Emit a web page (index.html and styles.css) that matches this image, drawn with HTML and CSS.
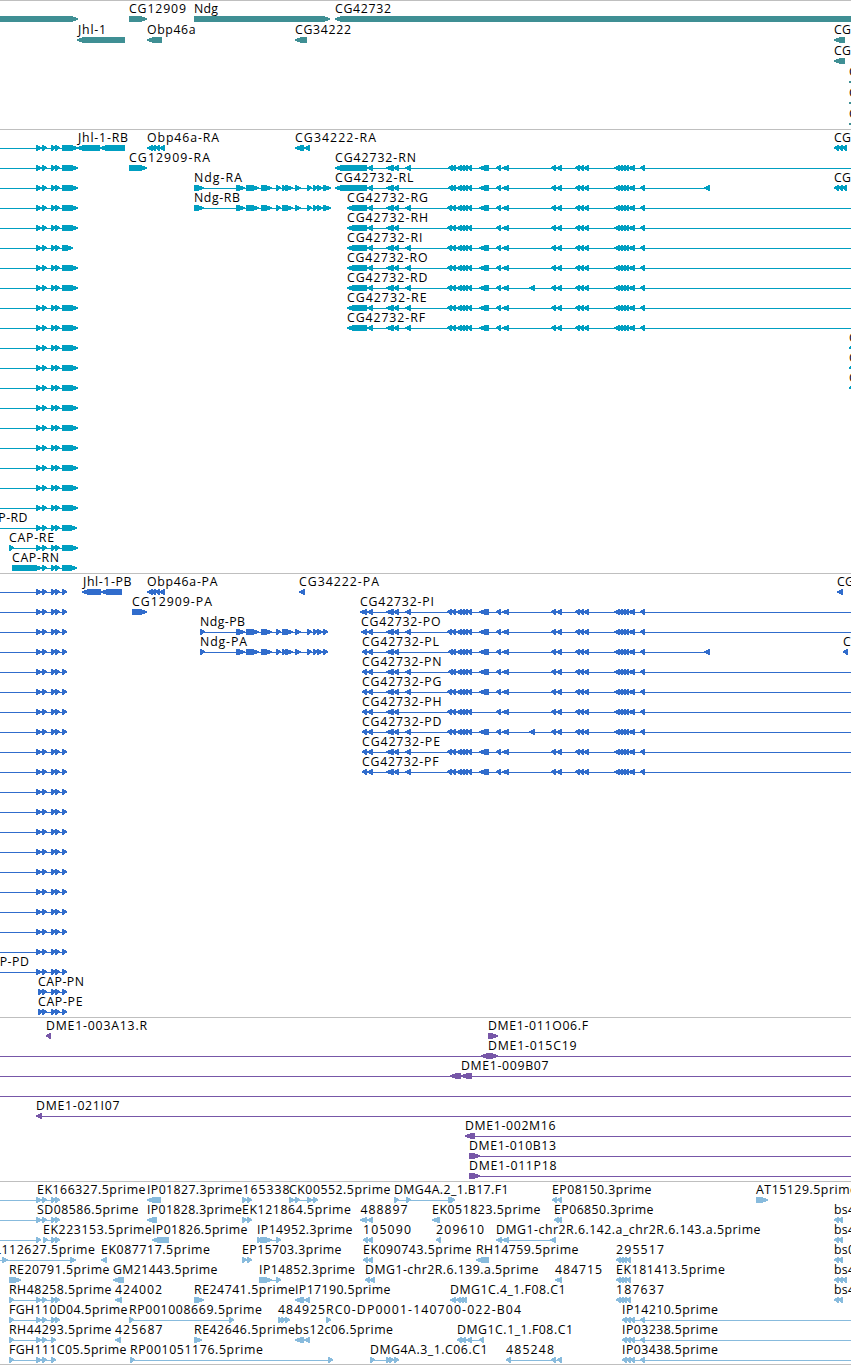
FILE: index.html
```html
<!DOCTYPE html>
<html lang="en">
<head>
    <meta charset="UTF-8">
    <meta name="viewport" content="width=device-width, initial-scale=1.0">
    <title>Genome Browser</title>
    <link rel="stylesheet" href="styles.css">
</head>
<body>

<div class="browser">
    <div class="track genes" id="genes"></div>
    <div class="track transcripts" id="transcripts"></div>
    <div class="track proteins" id="proteins"></div>
    <div class="track clones" id="clones"></div>
    <div class="track ests" id="ests"></div>
</div>

<script src="script.js"></script>
</body>
</html>
```
FILE: styles.css
```css
body {
    margin: 0;
    padding: 0;
    background-color: #fff;
    font-family: "Open Sans", "DejaVu Sans", sans-serif;
}
.browser {
    display: flex;
    flex-direction: column;
    overflow: hidden;
    height: 1365px;
}
.track {
    border-top: 1px solid #bfbfbf;
    box-sizing: border-box;
    overflow: hidden;
}
.track svg {
    display: block;
    width: 100%;
    height: 100%;
}
.track text {
    font-size: 12.3px;
    fill: #000;
}
.genes {
    height: 129px;
    color: #3f8f94;
}
.transcripts {
    height: 444px;
    color: #009fc1;
}
.proteins {
    height: 444px;
    color: #306ccc;
}
.clones {
    height: 164px;
    color: #7757a8;
}
.ests {
    height: 184px;
    color: #88bbdd;
    border-bottom: 1px solid #bfbfbf;
}
.glyph {
    fill: currentColor;
    shape-rendering: crispEdges;
}
```
FILE: script.js
```javascript
var NS = 'http://www.w3.org/2000/svg';
var END = 851;

// feature: [row, strand, label, label start, label end, exons, line start, line end]
var genes = [
    [0, '>', '', 0, 0, '-20-78'],
    [0, '>', 'CG12909', 129, 186, '129-147'],
    [0, '>', 'Ndg', 194, 218, '194-330'],
    [0, '<', 'CG42732', 335, 391, '335-870'],
    [1, '<', 'Jhl-1', 78, 106, '77-125'],
    [1, '<', 'Obp46a', 147, 195.5, '147-162'],
    [1, '<', 'CG34222', 295, 351, '295-307'],
    [1, '<', 'CG', 834, 851, '834-845'],
    [2, '<', 'CG', 834, 851, '834-845'],
    [3, '<', 'CG', 849, 866, '849-860'],
    [4, '<', 'CG', 849, 866, '849-860'],
    [5, '<', 'CG', 849, 866, '849-860']
];

var ndg = '236-245 246-259 261-272 276-281 ';
var ndgSplit = '282-287 285-293 295-301 307-312 313-318 317-323 ';
var ndgWhole = '282-293 295-301 307-312 313-318 317-323 ';
var left = ' 386-394 393-399';
var mid = ' 451-456 456-462 460-465 463-468 467-472';
var right = ' 496-501 502-509 551-556 556-562 575-580 579-584 583-589 614-620 618-623 621-626 624-629 628-635 640-645';

function cg42732(first, opts) {
    opts = opts || {};
    var s = first + left;
    if (!opts.short) s += ' 405-411';
    s += (opts.late ? ' 448-453' : ' 447-452') + mid;
    if (!opts.skip) s += ' 479-489';
    s += right;
    if (opts.extra) s += ' ' + opts.extra;
    return s;
}

var transcripts = [
    [0, '<', 'Jhl-1-RB', 78, 128, '77-100 100-125'],
    [0, '<', 'Obp46a-RA', 147, 219, '147-153 151-156 155-160 159-165'],
    [0, '<', 'CG34222-RA', 295, 376, '295-304 304-310'],
    [0, '<', 'CG', 834, 851, '834-839 838-843 842-847'],
    [1, '>', 'CG12909-RA', 129, 210, '129-147'],
    [1, '<', 'CG42732-RN', 335, 416, cg42732('335-367 367-373', {late: true}), 335, END],
    [2, '>', 'Ndg-RA', 194, 242, '194-204 ' + ndg + ndgSplit + '323-331'],
    [2, '<', 'CG42732-RL', 335, 413.5, cg42732('335-367 367-373', {late: true, short: true, extra: '704-710'})],
    [2, '<', 'CG', 834, 851, '834-839 838-843 842-847'],
    [3, '>', 'Ndg-RB', 194, 240, '194-204 ' + ndg + ndgWhole + '323-331'],
    [3, '<', 'CG42732-RG', 347, 428, cg42732('347-367 367-373'), 347, END],
    [4, '<', 'CG42732-RH', 347, 428, cg42732('347-367 367-373', {short: true, skip: true}), 347, END],
    [5, '<', 'CG42732-RI', 347, 422.5, cg42732('347-367 367-373'), 347, END],
    [6, '<', 'CG42732-RO', 347, 427.5, cg42732('347-367 367-373'), 347, END],
    [7, '<', 'CG42732-RD', 347, 427.5, cg42732('347-367 367-373', {extra: '529-535'}), 347, END],
    [8, '<', 'CG42732-RE', 347, 426.5, cg42732('347-367 367-373'), 347, END],
    [9, '<', 'CG42732-RF', 347, 425, cg42732('347-367 367-373'), 347, END],
    [10, '<', 'CG', 849, 866, '849-854'],
    [11, '<', 'CG', 849, 866, '849-854'],
    [12, '<', 'CG', 849, 866, '849-854'],
    [19, '>', 'CAP-RD', -18, 27.5, '36-42 42-47 51-56 55-60 62-77', 0, 77],
    [20, '>', 'CAP-RE', 9, 54, '9-14 36-42 42-47 51-56 55-60 62-78'],
    [21, '>', 'CAP-RN', 12, 59, '12-42 42-47 51-56 55-60 62-77']
];

var proteins = [
    [0, '<', 'Jhl-1-PB', 83, 131.5, '82-101 101-122'],
    [0, '<', 'Obp46a-PA', 147, 217.5, '147-153 151-156 155-160 159-165'],
    [0, '<', 'CG34222-PA', 299, 379, '299-305'],
    [0, '<', 'CG', 837, 854, '837-843'],
    [1, '>', 'CG12909-PA', 132, 212, '132-147'],
    [1, '<', 'CG42732-PI', 360, 434, cg42732('360-367 367-373'), 361, END],
    [2, '>', 'Ndg-PB', 200, 245, '200-205 ' + ndg + ndgWhole + '323-328'],
    [2, '<', 'CG42732-PO', 361, 440.5, cg42732('361-367 367-373'), 361, END],
    [3, '>', 'Ndg-PA', 200, 247, '200-205 ' + ndg + ndgSplit + '323-328'],
    [3, '<', 'CG42732-PL', 362, 439, cg42732('362-367 367-373', {late: true, short: true, extra: '704-710'})],
    [3, '<', 'CG', 843, 860, '843-848'],
    [4, '<', 'CG42732-PN', 362, 441.5, cg42732('362-367 367-373', {late: true}), 362, END],
    [5, '<', 'CG42732-PG', 362, 441.5, cg42732('362-367 367-373'), 362, END],
    [6, '<', 'CG42732-PH', 362, 441.5, cg42732('362-367 367-373', {short: true, skip: true}), 362, END],
    [7, '<', 'CG42732-PD', 362, 441.5, cg42732('362-367 367-373', {extra: '529-535'}), 362, END],
    [8, '<', 'CG42732-PE', 362, 440, cg42732('362-367 367-373'), 362, END],
    [9, '<', 'CG42732-PF', 362, 438.5, cg42732('362-367 367-373'), 362, END],
    [19, '>', 'CAP-PD', -17, 29, '36-42 42-47 51-56 55-60 62-67', 0, 67],
    [20, '>', 'CAP-PN', 38, 84, '38-43 42-47 51-56 55-60 62-67'],
    [21, '>', 'CAP-PE', 38, 82.5, '38-43 42-47 51-56 55-60 62-67']
];

// the CAP gene has one isoform on every row above its labelled ones
for (var i = 0; i < 19; i++) {
    var last = i === 5 ? 73 : 78;
    transcripts.push([i, '>', '', 0, 0, '36-42 42-47 51-56 55-60 62-' + last, 0, last]);
    proteins.push([i, '>', '', 0, 0, '36-42 42-47 51-56 55-60 62-67', 0, 67]);
}

var clones = [
    [0, '<', 'DME1-003A13.R', 46, 147, '46-51'],
    [0, '>', 'DME1-011O06.F', 488, 588, '488-498'],
    [1, '<', 'DME1-015C19', 488, 576.5, '481-490', 0, END],
    [1, '>', '', 0, 0, '489-498'],
    [2, '<', 'DME1-009B07', 461, 548.5, '450-461 461-472', 0, END],
    [3, '<', '', 0, 0, '', 0, END],
    [4, '<', 'DME1-021I07', 36, 119.5, '36-42', 36, END],
    [5, '<', 'DME1-002M16', 465, 555.5, '465-475', 465, END],
    [6, '>', 'DME1-010B13', 469, 556, '469-480', 469, END],
    [7, '>', 'DME1-011P18', 469, 556.5, '469-480', 469, END]
];

var ests = [
    [0, '>', 'EK166327.5prime', 37, 145.5, '36-42 42-47 51-56 55-60', 0, 60],
    [0, '<', 'IP01827.3prime', 147, 242.5, '147-161'],
    [0, '>', '165338', 242.5, 289.5, '242-247 247-252'],
    [0, '>', 'CK00552.5prime', 289, 390.5, '289-295 295-300 307-313 313-318'],
    [0, '>', 'DMG4A.2_1.B17.F1', 394, 508.5, '394-399 406-411 448-453 450-455'],
    [0, '<', 'EP08150.3prime', 552, 651.5, '552-557 557-562'],
    [0, '>', 'AT15129.5prime', 756, 857, '756-768'],
    [1, '>', 'SD08586.5prime', 37, 138.5, '36-42 42-47 51-56 55-60', 0, 60],
    [1, '<', 'IP01828.3prime', 147, 242, '147-157'],
    [1, '>', 'EK121864.5prime', 242, 351, '242-247 247-252'],
    [1, '<', '488897', 360.5, 407.5, '360-367 367-373'],
    [1, '<', 'EK051823.5prime', 432, 540.5, '432-440'],
    [1, '<', 'EP06850.3prime', 554, 653.5, '554-559 557-562'],
    [1, '<', 'bs4', 834, 855, '834-839 838-843'],
    [2, '>', '', 0, 0, '36-41', 0, 41],
    [2, '>', 'EK223153.5prime', 43, 152, '43-48 51-56 55-60'],
    [2, '<', 'IP01826.5prime', 152, 247.5, '152-169'],
    [2, '>', 'IP14952.3prime', 257, 352.5, '257-262 260-272 276-281'],
    [2, '<', '105090', 363, 411, '363-368 367-373'],
    [2, '<', '209610', 436, 484, '436-441'],
    [2, '<', 'DMG1-chr2R.6.142.a_chr2R.6.143.a.5prime', 496, 760.5, '496-502 502-509 550-556'],
    [2, '<', 'bs4', 834, 855, '834-839 838-843'],
    [3, '>', 'EL112627.5prime', -13, 95, '2-8 70-76', 0, 76],
    [3, '<', 'EK087717.5prime', 101, 210, '101-107'],
    [3, '>', 'EP15703.3prime', 242, 341.5, '242-247 247-252'],
    [3, '<', 'EK090743.5prime', 363, 471.5, '363-368 367-373'],
    [3, '<', 'RH14759.5prime', 476, 578.5, '476-489'],
    [3, '<', '295517', 616, 664, '616-621 619-624 622-627 626-631'],
    [3, '<', 'bs0', 834, 855, '834-839 838-843'],
    [4, '>', 'RE20791.5prime', 9, 109.5, '9-21'],
    [4, '<', 'GM21443.5prime', 113, 217.5, '113-124'],
    [4, '>', 'IP14852.3prime', 259, 355, '259-272 276-281'],
    [4, '<', 'DMG1-chr2R.6.139.a.5prime', 365, 538.5, '365-370 369-375'],
    [4, '<', '484715', 555, 602, '555-562'],
    [4, '<', 'EK181413.5prime', 616, 725, '616-621 619-624 622-627 626-631'],
    [4, '<', 'bs4', 834, 855, '834-839 838-843 842-847'],
    [5, '>', 'RH48258.5prime', 9, 111.5, '9-14 36-42 42-47 51-56 55-60'],
    [5, '<', '424002', 115, 162, '115-122'],
    [5, '>', 'RE24741.5prime', 194, 295, '194-204'],
    [5, '<', 'IP17190.5prime', 295, 390.5, '295-304 304-310'],
    [5, '<', 'DMG1C.4_1.F08.C1', 450, 565.5, '450-456 456-461 459-464 462-467'],
    [5, '<', '187637', 616, 664, '616-621 619-624 622-627 626-631'],
    [5, '<', 'bs4', 834, 855, '834-839 838-843'],
    [6, '>', 'FGH110D04.5prime', 9, 127.5, '9-14 36-42 42-47 51-56 55-60'],
    [6, '>', 'RP001008669.5prime', 129, 262, '129-134 229-234'],
    [6, '>', '484925', 278, 325, '278-283 281-286 285-290'],
    [6, '>', 'RC0-DP0001-140700-022-B04', 326, 521, '326-331'],
    [6, '<', 'IP14210.5prime', 622, 718, '622-627 626-631 630-635 640-645', 622, END],
    [7, '>', 'RH44293.5prime', 9, 111.5, '9-14 36-42 42-47 51-56'],
    [7, '<', '425687', 115, 162.5, '115-121'],
    [7, '>', 'RE42646.5prime', 194, 295, '194-202'],
    [7, '<', 'bs12c06.5prime', 295, 393, '295-304 304-310'],
    [7, '<', 'DMG1C.1_1.F08.C1', 457, 573, '457-462 460-466 466-472 479-484'],
    [7, '<', 'IP03238.5prime', 622, 718, '622-627 626-631 630-635 640-645', 622, END],
    [8, '>', 'FGH111C05.5prime', 9, 126.5, '9-14 36-42 42-47 51-56'],
    [8, '>', 'RP001051176.5prime', 130, 263, '130-135 328-333'],
    [8, '>', 'DMG4A.3_1.C06.C1', 370, 487.5, '370-375 386-391 389-394 394-399'],
    [8, '<', '485248', 506, 554, '506-511 551-556 557-562'],
    [8, '<', 'IP03438.5prime', 622, 718, '622-627 626-631 630-635 640-645', 622, END]
];

function add(parent, name, attrs) {
    var el = document.createElementNS(NS, name);
    for (var key in attrs) el.setAttribute(key, attrs[key]);
    parent.appendChild(el);
    return el;
}

// the head is up to 6px long and always leaves a full-height column behind it
function arrow(svg, a, b, y, dir) {
    var tip = Math.min(6, b - a - 1);
    var points;
    if (dir === '>') {
        points = [a, y, b - tip, y, b, y + 2.4, b, y + 3.6, b - tip, y + 6, a, y + 6];
    } else {
        points = [b, y, a + tip, y, a, y + 2.4, a, y + 3.6, a + tip, y + 6, b, y + 6];
    }
    add(svg, 'polygon', {'class': 'glyph', points: points.join(' ')});
}

function drawTrack(id, features, pitch) {
    var svg = add(document.getElementById(id), 'svg', {});
    features.forEach(function (f) {
        var top = f[0] * pitch + 15;
        var exons = (f[5].match(/-?\d+-\d+/g) || []).map(function (e) {
            var m = e.match(/^(-?\d+)-(\d+)$/);
            return [+m[1], +m[2]];
        });
        var from = f[6] === undefined ? exons[0][0] : f[6];
        var to = f[7] === undefined ? exons[exons.length - 1][1] : f[7];
        if (exons.length !== 1 || f[6] !== undefined) {
            add(svg, 'rect', {'class': 'glyph', x: from, y: top + 3, width: to - from, height: 1});
        }
        exons.forEach(function (e) {
            arrow(svg, e[0], e[1], top, f[1]);
        });
        if (f[2]) {
            add(svg, 'text', {x: f[3], y: top - 3, textLength: f[4] - f[3]}).textContent = f[2];
        }
    });
}

drawTrack('genes', genes, 21);
drawTrack('transcripts', transcripts, 20);
drawTrack('proteins', proteins, 20);
drawTrack('clones', clones, 20);
drawTrack('ests', ests, 20);
```
